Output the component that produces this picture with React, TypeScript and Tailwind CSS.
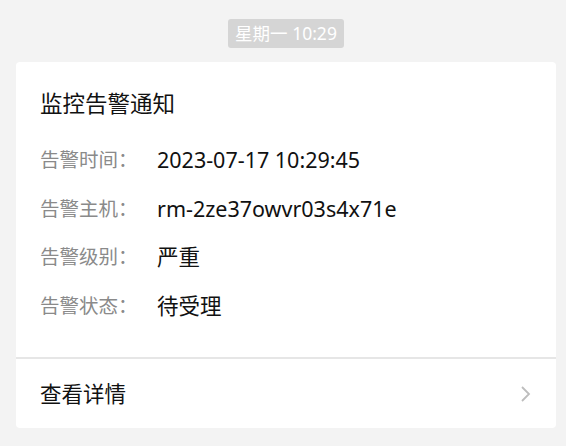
import React from 'react';

const rows = [
    { label: '告警时间：', value: '2023-07-17 10:29:45' },
    { label: '告警主机：', value: 'rm-2ze37owvr03s4x71e' },
    { label: '告警级别：', value: '严重' },
    { label: '告警状态：', value: '待受理' },
];

const App: React.FC = () => {
    return (
        <div
            className="h-screen w-full overflow-hidden bg-[#f3f3f3] pl-4 pr-[10px] pt-[19px]"
            style={{ fontFamily: '"Noto Sans", "Noto Sans CJK SC", sans-serif' }}
        >
            <div className="flex justify-center">
                <span className="rounded-[3px] bg-[#d5d5d5] px-[7px] h-[29px] leading-[29px] text-[17.5px] text-white">
                    星期一 10:29
                </span>
            </div>

            <div className="mt-[14px] rounded-[4px] bg-white">
                <div className="px-6 pt-[28px] pb-[37px]">
                    <h1 className="text-[22.5px] leading-[28px] text-[#111]">监控告警通知</h1>
                    <div className="mt-[28px] flex flex-col gap-[20.5px]">
                        {rows.map(row => (
                            <div key={row.label} className="flex items-center leading-[28px]">
                                <span className="w-[117px] shrink-0 text-[19.5px] text-[#8a8a8a]">{row.label}</span>
                                <span className="text-[21.5px] text-[#111]">{row.value}</span>
                            </div>
                        ))}
                    </div>
                </div>
                <div className="h-[2px] bg-[#e6e6e6]" />
                <div className="flex h-[69px] items-center justify-between pl-6 pr-6">
                    <span className="mt-[3px] text-[21.5px] text-[#111]">查看详情</span>
                    <svg width="12" height="18" viewBox="0 0 12 18" fill="none" className="mt-[2px]">
                        <path d="M2 2 L9 9 L2 16" stroke="#bdbdbd" strokeWidth="1.8" />
                    </svg>
                </div>
            </div>
        </div>
    );
};

export default App;
